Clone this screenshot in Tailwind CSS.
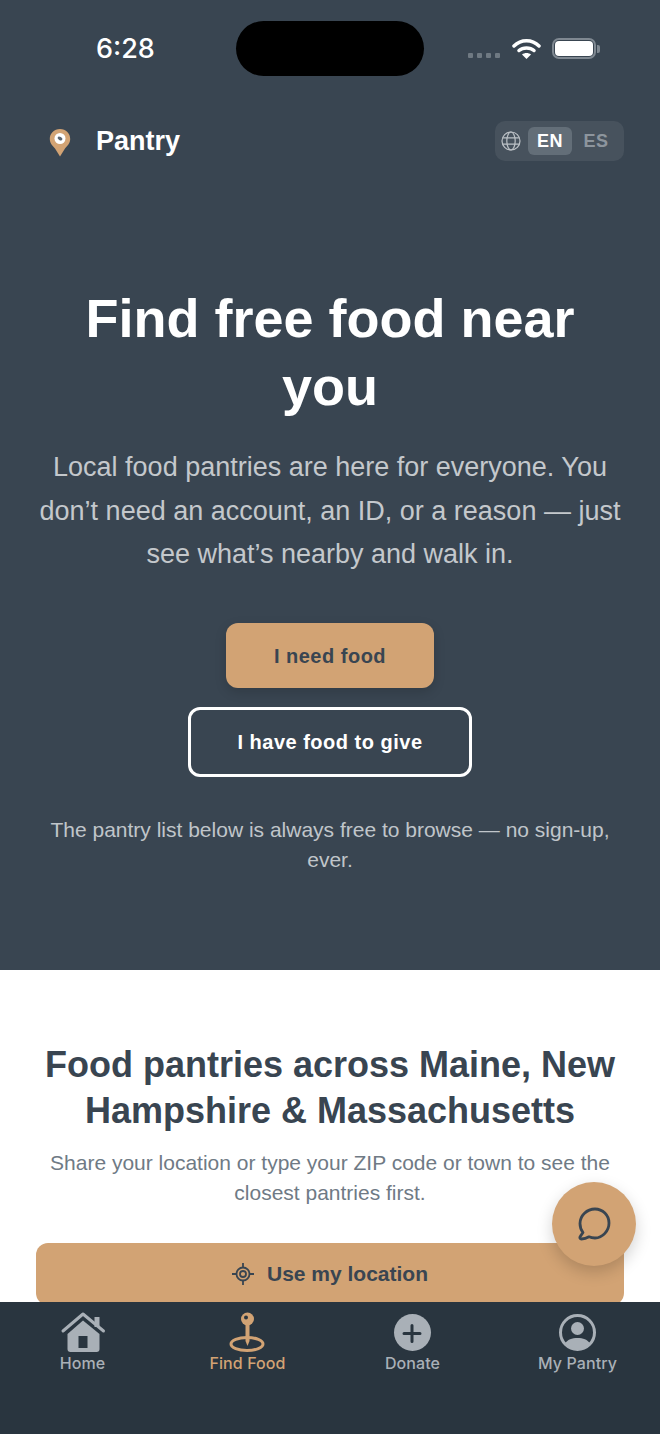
<!DOCTYPE html>
<html lang="en">
<head>
    <meta charset="UTF-8">
    <meta name="viewport" content="width=device-width, initial-scale=1.0">
    <title>Pantry</title>
    <script src="https://cdn.jsdelivr.net/npm/@tailwindcss/browser@4"></script>
</head>
<body class="bg-white font-['Liberation_Sans',Arial,sans-serif]">
<div class="relative w-[660px] h-[1434px] overflow-hidden">
    <!-- Hero -->
    <section class="h-[970px] bg-[#394551] flex flex-col">
        <!-- Status bar -->
        <div class="h-[76px] pt-[21px] flex items-start">
            <div class="w-[236px] pl-[96px] pt-[12px] text-[27px] leading-[32px] font-['Inter',sans-serif] font-medium text-white">6:28</div>
            <div class="w-[188px] h-[55px] rounded-[28px] bg-black"></div>
            <div class="flex items-start pl-[44px]">
                <div class="flex gap-[4px] pt-[32px]">
                    <span class="w-[5px] h-[5px] rounded-[1px] bg-[#6f7982]"></span>
                    <span class="w-[5px] h-[5px] rounded-[1px] bg-[#6f7982]"></span>
                    <span class="w-[5px] h-[5px] rounded-[1px] bg-[#6f7982]"></span>
                    <span class="w-[5px] h-[5px] rounded-[1px] bg-[#6f7982]"></span>
                </div>
                <svg class="ml-[12px] mt-[17px]" width="29" height="21" viewBox="0 0 29 21" fill="none">
                    <path d="M2 8C9 1 20 1 27 8" stroke="#fff" stroke-width="3.5" stroke-linecap="round"/>
                    <path d="M7 12.5C11 9 18 9 22 12.5" stroke="#fff" stroke-width="3.5" stroke-linecap="round"/>
                    <path d="M10 16.5C12.5 14.5 16.5 14.5 19 16.5L14.5 21Z" fill="#fff"/>
                </svg>
                <div class="ml-[11px] mt-[17px] w-[44px] h-[21px] rounded-[7px] border-2 border-[#7f8891] p-[1px]">
                    <div class="w-full h-full rounded-[4px] bg-white"></div>
                </div>
                <div class="w-[3px] h-[8px] mt-[24px] ml-[1px] rounded-r-[2px] bg-[#7f8891]"></div>
            </div>
        </div>

        <!-- Header -->
        <header class="mt-[45px] h-[40px] flex items-center justify-between pl-[49px] pr-[36px]">
            <div class="flex items-center">
                <svg class="mt-[3px]" width="22" height="29" viewBox="0 0 22 29">
                    <path d="M11 1C5 1 .8 5.5 .8 11c0 4.500 3 7 5.200 9.500L11 28.500l5-8c2.200-2.500 5.200-5 5.200-9.500C21.200 5.500 17 1 11 1Z" fill="#d2a374"/>
                    <circle cx="11" cy="10.5" r="5.5" fill="#fff"/>
                    <ellipse cx="11" cy="10.5" rx="2.6" ry="1.6" transform="rotate(30 11 10.5)" fill="#5d6670"/>
                </svg>
                <span class="ml-[25px] text-[27px] leading-[40px] font-bold text-white">Pantry</span>
            </div>
            <div class="w-[129px] h-[40px] rounded-[10px] bg-[#47525d] flex items-center pl-[6px]">
                <svg width="20" height="20" viewBox="0 0 20 20" fill="none" stroke="#bcc1c6" stroke-width="1.2">
                    <circle cx="10" cy="10" r="9"/>
                    <ellipse cx="10" cy="10" rx="4.2" ry="9"/>
                    <path d="M1.8 6.8h16.4M1.8 13.2h16.4"/>
                </svg>
                <span class="ml-[7px] w-[44px] h-[28px] rounded-[6px] bg-[#636e78] text-center text-[18px] leading-[28px] tracking-[0.5px] font-bold text-white">EN</span>
                <span class="ml-[2px] w-[44px] text-center text-[18px] leading-[28px] tracking-[0.5px] font-bold text-[#8d959d]">ES</span>
            </div>
        </header>

        <!-- Hero copy -->
        <div class="mt-[123px] px-[36px] text-center flex flex-col items-center">
            <h1 class="text-[54px] leading-[68px] font-bold text-white">Find free food near you</h1>
            <p class="mt-[26px] text-[27px] leading-[43.5px] text-[#c4c8cc]">Local food pantries are here for everyone. You don’t need an account, an ID, or a reason — just see what’s nearby and walk in.</p>
            <button class="mt-[46px] w-[208px] h-[65px] pt-[2px] rounded-[12px] bg-[#d2a374] text-[20px] font-bold tracking-[0.5px] text-[#394551] shadow-[0_4px_12px_rgba(0,0,0,0.15)]">I need food</button>
            <button class="mt-[19px] w-[284px] h-[70px] pt-[1px] rounded-[12px] border-[3px] border-white text-[20px] font-bold tracking-[0.5px] text-white">I have food to give</button>
            <p class="mt-[38px] text-[21px] leading-[30px] text-[#c0c5ca]">The pantry list below is always free to browse — no sign-up, ever.</p>
        </div>
    </section>

    <!-- Pantry search -->
    <section class="bg-white px-[36px] pt-[72px] text-center">
        <h2 class="text-[36px] leading-[46px] font-bold text-[#394551]">Food pantries across Maine, New Hampshire &amp; Massachusetts</h2>
        <p class="mt-[14px] text-[21px] leading-[30px] text-[#6f7a85]">Share your location or type your ZIP code or town to see the closest pantries first.</p>
        <button class="mt-[35px] w-full h-[62px] rounded-[12px] bg-[#d2a374] flex items-center justify-center text-[21px] font-bold text-[#394551]">
            <svg class="mr-[13px]" width="22" height="22" viewBox="0 0 22 22" fill="none" stroke="#394551" stroke-width="1.8">
                <circle cx="11" cy="11" r="6.5"/>
                <circle cx="11" cy="11" r="3"/>
                <path d="M11 0v4.500M11 17.500V22M0 11h4.500M17.500 11H22"/>
            </svg>
            Use my location
        </button>
    </section>

    <!-- Chat button -->
    <button class="absolute left-[552px] top-[1182px] w-[84px] h-[84px] rounded-full bg-[#d2a374] flex items-center justify-center shadow-[0_6px_16px_rgba(0,0,0,0.18)]">
        <svg width="34" height="34" viewBox="0 0 34 34" fill="none" stroke="#394551" stroke-width="2.8" stroke-linejoin="round">
            <path d="M18 2C25.700 2 32 8.300 32 16S25.700 31 18 31c-2.300 0-4.300-.4-6-1.200C10 31 7.500 32 4.500 32 3 32 2.300 30.500 3.300 29.400L6 25.500C4 23 3 19.800 3 16.500 3 8.300 10 2 18 2Z"/>
        </svg>
    </button>

    <!-- Tab bar -->
    <nav class="absolute left-0 right-0 bottom-0 h-[132px] bg-[#29353f] grid grid-cols-4 pt-[10px]">
        <a class="flex flex-col items-center text-[#a9b0b7]">
            <svg width="46" height="42" viewBox="0 0 46 42" fill="#a9b0b7">
                <path d="M7.500 22 23 8.500 39.500 22v15a3 3 0 0 1-3 3h-26a3 3 0 0 1-3-3Z"/>
                <rect x="18.5" y="24" width="9" height="12" fill="#29353f"/>
                <path d="M3 19 23 2l20.500 17" fill="none" stroke="#a9b0b7" stroke-width="3" stroke-linecap="round" stroke-linejoin="round"/>
                <rect x="34.5" y="5" width="5" height="10"/>
            </svg>
            <span class="-mt-[1px] text-[16px] leading-[20px] tracking-[0.1px] font-['Inter',sans-serif] font-medium">Home</span>
        </a>
        <a class="flex flex-col items-center text-[#d2a374]">
            <svg width="46" height="42" viewBox="0 0 46 42" fill="none">
                <ellipse cx="22" cy="32" rx="16" ry="6.5" stroke="#d2a374" stroke-width="3"/>
                <path d="M20.500 11h4v18l-2 5-2-5Z" fill="#d2a374"/>
                <circle cx="22.5" cy="7" r="6.5" fill="#d2a374"/>
                <circle cx="21" cy="5.5" r="2" fill="#29353f"/>
            </svg>
            <span class="-mt-[1px] text-[16px] leading-[20px] tracking-[0.1px] font-['Inter',sans-serif] font-medium">Find Food</span>
        </a>
        <a class="flex flex-col items-center text-[#a9b0b7]">
            <svg width="46" height="42" viewBox="0 0 46 42">
                <circle cx="22.5" cy="20.5" r="18.5" fill="#a9b0b7"/>
                <path d="M22 13.500v16M14 21.500h16" stroke="#29353f" stroke-width="3" stroke-linecap="round"/>
            </svg>
            <span class="-mt-[1px] text-[16px] leading-[20px] tracking-[0.1px] font-['Inter',sans-serif] font-medium">Donate</span>
        </a>
        <a class="flex flex-col items-center text-[#a9b0b7]">
            <svg width="46" height="42" viewBox="0 0 46 42">
                <circle cx="22.5" cy="20.5" r="17" fill="none" stroke="#a9b0b7" stroke-width="3"/>
                <circle cx="22.5" cy="16.5" r="6.5" fill="#a9b0b7"/>
                <path d="M9.500 32C12.500 27.500 17 26 22.500 26S32.500 27.500 35.500 32C32 36 28 37.500 22.500 37.500S13 36 9.500 32Z" fill="#a9b0b7"/>
            </svg>
            <span class="-mt-[1px] text-[16px] leading-[20px] tracking-[0.1px] font-['Inter',sans-serif] font-medium">My Pantry</span>
        </a>
    </nav>
</div>
</body>
</html>
